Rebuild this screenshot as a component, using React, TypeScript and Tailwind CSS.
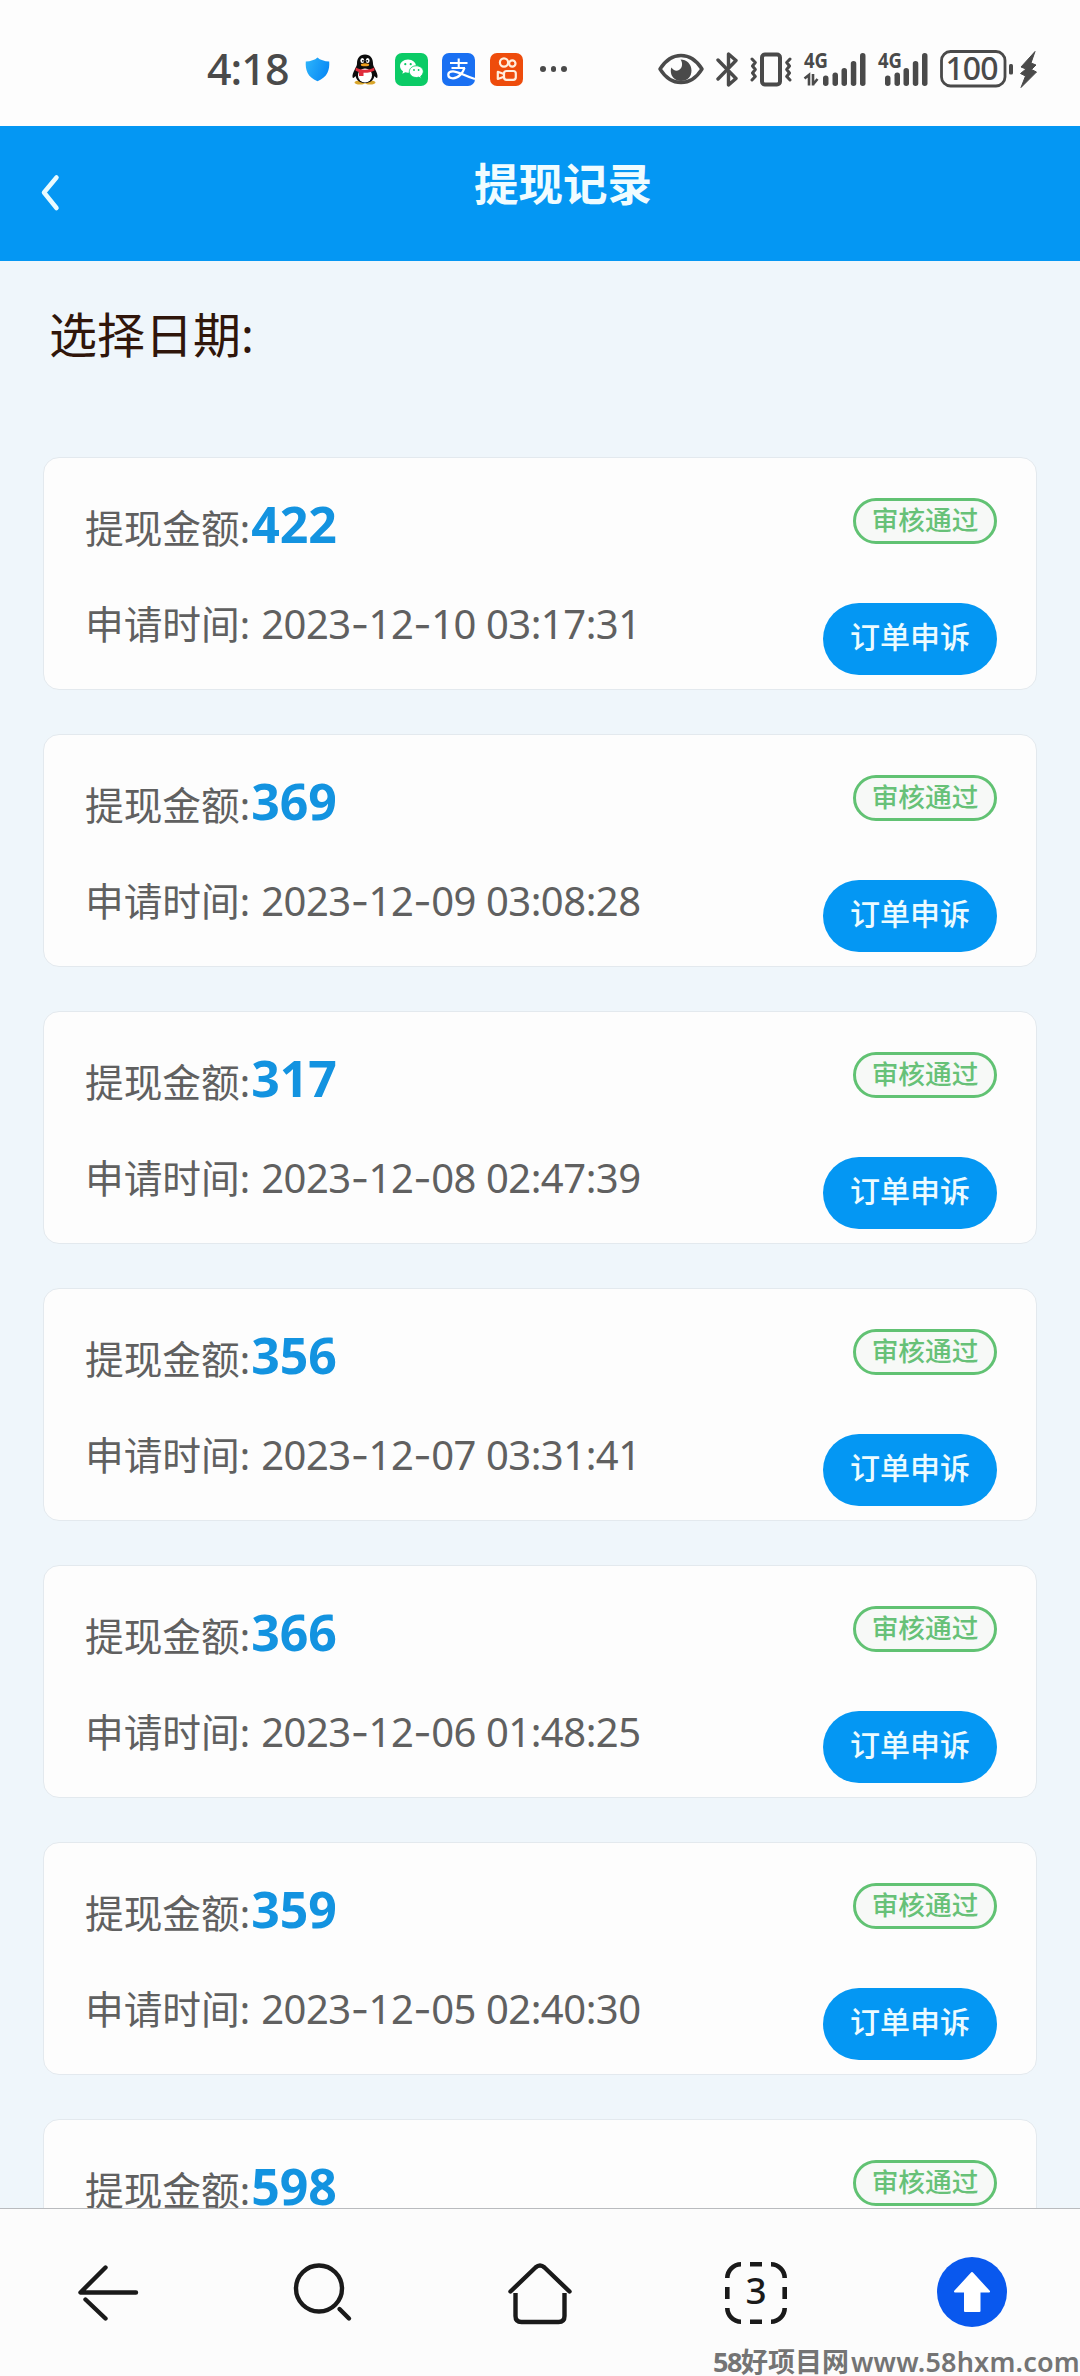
import { Fragment } from 'react';

interface WithdrawRecord {
  amount: number;
  appliedAt: string;
}

const records: WithdrawRecord[] = [
  { amount: 422, appliedAt: '2023-12-10 03:17:31' },
  { amount: 369, appliedAt: '2023-12-09 03:08:28' },
  { amount: 317, appliedAt: '2023-12-08 02:47:39' },
  { amount: 356, appliedAt: '2023-12-07 03:31:41' },
  { amount: 366, appliedAt: '2023-12-06 01:48:25' },
  { amount: 359, appliedAt: '2023-12-05 02:40:30' },
  { amount: 598, appliedAt: '' },
];

function ShieldIcon() {
  return (
    <svg width="25" height="25" viewBox="0 0 25 25">
      <defs>
        <linearGradient id="shield" x1="0" y1="0" x2="1" y2="0.4">
          <stop offset="0" stopColor="#2fb6fb" />
          <stop offset="1" stopColor="#0a8bf5" />
        </linearGradient>
      </defs>
      <path d="M12.5 0.5C15 3 19.500 4.300 24.200 4.500C24.800 13 22.500 20 12.500 24.300C2.500 20 0.200 13 0.800 4.500C5.500 4.300 10 3 12.500 0.500Z" fill="url(#shield)" />
    </svg>
  );
}

function PenguinIcon() {
  return (
    <svg width="26" height="31" viewBox="0 0 26 31">
      <ellipse cx="8" cy="28.500" rx="5.500" ry="2" fill="#d9a62c" />
      <ellipse cx="18" cy="28.500" rx="5.500" ry="2" fill="#d9a62c" />
      <path d="M13 0.500C7.500 0.500 5 4.500 5 9.500C5 11 4.300 12.500 3 15C1.200 18.500 0 21.500 0.600 23.500C1.200 24.500 2.500 23.500 3.500 22C4.500 26.500 8 29 13 29S21.500 26.500 22.500 22C23.500 23.500 24.800 24.500 25.400 23.500C26 21.500 24.800 18.500 23 15C21.700 12.500 21 11 21 9.500C21 4.500 18.500 0.500 13 0.500Z" fill="#0c0c0c" />
      <ellipse cx="13" cy="21.500" rx="7" ry="7" fill="#fff" />
      <ellipse cx="10.300" cy="6.500" rx="1.900" ry="2.600" fill="#fff" />
      <ellipse cx="15.700" cy="6.500" rx="1.900" ry="2.600" fill="#fff" />
      <circle cx="10.900" cy="6.800" r="0.900" fill="#000" />
      <circle cx="15.200" cy="6.800" r="0.900" fill="#000" />
      <ellipse cx="13" cy="10.800" rx="4.200" ry="1.500" fill="#f0a01e" />
      <path d="M3.800 13.500C9 16.500 17 16.500 22.200 13.500L22.500 16.500C19 18.500 15 19 11.500 18.800V22H7V18C5.500 17.600 4.500 17.200 3.500 16.500Z" fill="#e02d3c" />
    </svg>
  );
}

function WechatIcon() {
  return (
    <svg width="33" height="33" viewBox="0 0 33 33">
      <rect width="33" height="33" rx="7" fill="#0bcb66" />
      <path d="M13 6.500C8.400 6.500 5 9.500 5 13C5 15.200 6.200 17 8 18.200L7.400 20.700L10.200 19.300Q11.500 19.700 13 19.700C17.600 19.700 21 16.700 21 13.100S17.600 6.500 13 6.500Z" fill="#fff" />
      <path d="M21.300 12.800C17.400 12.800 14.300 15.400 14.300 18.600S17.400 24.500 21.300 24.500Q22.500 24.500 23.700 24.100L26.300 25.500L25.700 23.200C27.300 22.100 28.300 20.500 28.300 18.600C28.300 15.400 25.200 12.800 21.300 12.800Z" fill="#fff" stroke="#0bcb66" strokeWidth="0.900" />
      <g fill="#0bcb66">
        <circle cx="10.300" cy="11.200" r="1.100" />
        <circle cx="15.700" cy="11.200" r="1.100" />
        <circle cx="19" cy="17" r="0.900" />
        <circle cx="23.600" cy="17" r="0.900" />
      </g>
    </svg>
  );
}

function AlipayIcon() {
  return (
    <svg width="34" height="33" viewBox="0 0 34 33" fill="none" stroke="#fff">
      <rect width="33" height="33" rx="7" fill="#1a70f2" stroke="none" />
      <path d="M8 10H25.500M16.700 5.500V15M9.500 15H23" strokeWidth="2.100" />
      <path d="M22.500 15C21 19.500 16.500 25.300 11 25.300C7.500 25.300 6.300 23.500 6.300 21.800C6.300 19.800 8 18.300 11 18.300C16 18.300 21 22.500 33 26" strokeWidth="2.300" />
    </svg>
  );
}

function KuaishouIcon() {
  return (
    <svg width="33" height="33" viewBox="0 0 33 33" fill="none" stroke="#ffeedd" strokeWidth="2.200" strokeLinejoin="round">
      <rect width="33" height="33" rx="7" fill="#ee4c0c" stroke="none" />
      <circle cx="14" cy="9.500" r="4.100" />
      <circle cx="22.300" cy="10.500" r="3.200" />
      <rect x="14" y="18" width="11.800" height="8.800" rx="2.500" />
      <path d="M14 21L7.800 18.800V26L14 23.800" />
    </svg>
  );
}

function EyeIcon() {
  return (
    <svg width="46" height="32" viewBox="0 0 46 32">
      <path d="M2 16C7 8 14 2.500 23 2.500S39 8 44 16C39 24 32 29.500 23 29.500S7 24 2 16Z" fill="none" stroke="#4a4a4a" strokeWidth="3.400" strokeLinejoin="round" />
      <path d="M22.500 6.500C28.500 6.500 33.500 11 33.500 17.500S29 28 23 28S12.800 23.500 12.800 18C12.800 16.500 13 15.500 13.500 14.500C15 17.500 18.500 18.500 21 17C24.500 15 25 10 22.500 6.500Z" fill="#4a4a4a" />
    </svg>
  );
}

function BluetoothIcon() {
  return (
    <svg width="22" height="35" viewBox="0 0 22 35" fill="none" stroke="#4a4a4a" strokeWidth="3.400" strokeLinecap="round" strokeLinejoin="round">
      <path d="M2 8L20 26.500L12.500 33V21M2 27L20 8.500L12.500 2V14" />
    </svg>
  );
}

function VibrateIcon() {
  return (
    <svg width="42" height="35" viewBox="0 0 42 35" fill="none" stroke="#4a4a4a" strokeLinecap="round" strokeLinejoin="round">
      <rect x="12" y="2.500" width="18" height="30" rx="3" strokeWidth="4" />
      <path d="M2 7L5.300 10.500L2.500 14L5.300 17.500L2.500 21L5.300 24.500L2 28M40 7L36.700 10.500L39.500 14L36.700 17.500L39.500 21L36.700 24.500L40 28" strokeWidth="3" />
    </svg>
  );
}

function SignalIcon({ withData }: { withData?: boolean }) {
  const shift = withData ? 12 : 0;

  return (
    <svg
      width={withData ? 62 : 50}
      height="36"
      viewBox={withData ? '0 0 62 36' : '0 0 50 36'}
      fill="#4a4a4a"
      className="overflow-visible"
    >
      <text x="0" y="16.500" fontSize="22" fontWeight="700" textLength="24" lengthAdjust="spacingAndGlyphs" className="font-['Noto_Sans']">4G</text>
      {withData && (
        <path d="M0.500 27.500L5 24V34.500M9 23V34.500M9 33.500L13.500 28" fill="none" stroke="#4a4a4a" strokeWidth="2.600" />
      )}
      <g transform={`translate(${shift} 0)`}>
        <rect x="7" y="24.500" width="5.500" height="10.500" rx="2.700" />
        <rect x="16.500" y="21.500" width="5.500" height="13.500" rx="2.700" />
        <rect x="25.500" y="17" width="5.500" height="18" rx="2.700" />
        <rect x="34.800" y="10" width="5.500" height="25" rx="2.700" />
        <rect x="44" y="2" width="5.500" height="33" rx="2.700" />
      </g>
    </svg>
  );
}

function BatteryIcon() {
  return (
    <svg width="74" height="38" viewBox="0 0 74 38" className="overflow-visible">
      <rect x="1.500" y="1.500" width="63.500" height="34.500" rx="9" fill="none" stroke="#4a4a4a" strokeWidth="2.800" />
      <rect x="69" y="14" width="4" height="10.500" rx="1.500" fill="#4a4a4a" />
      <text x="5.500" y="30" fontSize="32" fontWeight="500" textLength="53" fill="#4a4a4a" className="font-['Noto_Sans']">100</text>
    </svg>
  );
}

function BoltIcon() {
  return (
    <svg width="17" height="37" viewBox="0 0 17 37" fill="#4a4a4a">
      <path d="M15 0.500L1 16L6 18L0.500 22.500L5.500 25L1 36.500L16.500 21L11.500 18.500L16 14L11 12Z" stroke="#4a4a4a" strokeLinejoin="round" />
    </svg>
  );
}

function StatusBar() {
  return (
    <div className="flex h-[126px] shrink-0 items-center justify-between bg-[#fdfdfd] pt-3 pr-[43px] pl-[207px] text-[#4a4a4a]">
      <div className="flex items-center">
        <span className="w-[98px] text-[43px] leading-[60px] font-medium tracking-[-1px]">4:18</span>
        <ShieldIcon />
        <div className="ml-[22px] flex"><PenguinIcon /></div>
        <div className="ml-[17px] flex items-center gap-[14px]">
          <WechatIcon />
          <AlipayIcon />
          <KuaishouIcon />
        </div>
        <div className="ml-[17px] flex gap-[5px]">
          <i className="size-[5.500px] rounded-full bg-[#4a4a4a]" />
          <i className="size-[5.500px] rounded-full bg-[#4a4a4a]" />
          <i className="size-[5.500px] rounded-full bg-[#4a4a4a]" />
        </div>
      </div>
      <div className="flex items-center gap-3">
        <EyeIcon />
        <BluetoothIcon />
        <VibrateIcon />
        <SignalIcon withData />
        <SignalIcon />
        <div className="flex items-center gap-1.5">
          <BatteryIcon />
          <BoltIcon />
        </div>
      </div>
    </div>
  );
}

function Header() {
  return (
    <header className="flex h-[135px] shrink-0 items-start bg-[#0497f3] text-white">
      <button className="mt-[48px] ml-10 flex" aria-label="返回">
        <svg width="20" height="38" viewBox="0 0 20 38" fill="none" stroke="#e9fbff" strokeWidth="4.500" strokeLinecap="round" strokeLinejoin="round">
          <path d="M16.500 3.500L4 18.500L16.500 34" />
        </svg>
      </button>
      <h1 className="mt-[22px] ml-[414px] text-[44.500px] leading-[72px] font-bold text-[#f0fcff]">提现记录</h1>
    </header>
  );
}

// The dashes come from Inter, whose hyphen is longer and sits higher
function DateTime({ value }: { value: string }) {
  return (
    <span className="ml-[11px] text-[40px] tracking-[-0.5px]">
      {value.split('-').map((part, i) => (
        <Fragment key={i}>
          {i > 0 && <span className="font-['Inter']">-</span>}
          {part}
        </Fragment>
      ))}
    </span>
  );
}

function RecordCard({ record }: { record: WithdrawRecord }) {
  return (
    <li className="flex h-[233px] shrink-0 justify-between rounded-2xl border border-[#e3e9ee] bg-[#fdfdfd] pr-[39px] pl-[41px] text-[#606060]">
      <div>
        <div className="mt-[34px] flex h-[64px] items-baseline text-[38.700px] leading-[64px]">
          提现金额:
          <span className="ml-px text-[50px] font-bold text-[#1393e0]">{record.amount}</span>
        </div>
        {record.appliedAt && (
          <div className="mt-[36px] flex h-[64px] items-baseline text-[38.700px] leading-[64px]">
            申请时间:
            <DateTime value={record.appliedAt} />
          </div>
        )}
      </div>
      <div className="flex flex-col items-end">
        <span className="mt-[40px] flex h-[46px] w-[144px] justify-center rounded-full border-3 border-[#61c273] bg-[#f7f9f7] text-[26.700px] leading-[38px] font-medium text-[#67c178]">
          审核通过
        </span>
        <button className="mt-[59px] h-[72px] w-[174px] rounded-full bg-[#0497f3] pb-1 text-[30px] leading-[44px] font-medium text-[#ecfbff]">
          订单申诉
        </button>
      </div>
    </li>
  );
}

function BrowserNav() {
  return (
    <nav className="relative h-[168px] shrink-0 border-t border-[#b9bbbe] bg-[#fcfcfc]">
      <div className="flex items-start pt-[48px] pl-[77px]">
        <svg className="mt-[7px]" width="62" height="58" viewBox="0 0 62 58" fill="none" stroke="#1a1a1a" strokeWidth="4.400" strokeLinecap="round">
          <path d="M28.500 3.500L3.500 28.500H59M8.500 35.500L28.500 54.500" strokeLinejoin="round" />
        </svg>
        <svg className="mt-[5px] ml-[153px]" width="62" height="62" viewBox="0 0 62 62" fill="none" stroke="#1a1a1a" strokeWidth="4.400" strokeLinecap="round">
          <circle cx="27" cy="26.500" r="23" />
          <path d="M47.500 47L57 56.500" />
        </svg>
        <svg className="mt-[3px] ml-[153px]" width="66" height="66" viewBox="0 0 66 66" fill="none" stroke="#1a1a1a" strokeWidth="4.400">
          <path d="M3.500 31.500L28.500 7.500Q33 3.500 37.500 7.500L62.500 31.500" strokeLinecap="round" />
          <path d="M8.500 33V56Q8.500 62 14.500 62H51.500Q57.500 62 57.500 56V33" />
        </svg>
        <div className="mt-[5px] ml-[152px] flex">
          <svg width="62" height="62" viewBox="0 0 62 62" fill="none" stroke="#1a1a1a" strokeWidth="4.600">
            <path d="M2.300 16C2.300 8.500 8.500 2.300 16 2.300M46 2.300C53.500 2.300 59.700 8.500 59.700 16M59.700 46C59.700 53.500 53.500 59.700 46 59.700M16 59.700C8.500 59.700 2.300 53.500 2.300 46M25 2.300H37M25 59.700H37M2.300 25V37M59.700 25V37" />
            <text x="31" y="42" textAnchor="middle" fontSize="37" fontWeight="500" fill="#1a1a1a" stroke="none" className="font-['Noto_Sans']">3</text>
          </svg>
        </div>
        <svg className="ml-[150px]" width="70" height="70" viewBox="0 0 70 70">
          <circle cx="35" cy="35" r="35" fill="#0958ee" />
          <path d="M35 16L52 34.500H42.500V54H28V34.500H18Z" fill="#fff" stroke="#fff" strokeWidth="2" strokeLinejoin="round" />
        </svg>
      </div>
      <div className="absolute right-0 bottom-[-4px] flex w-[367px] items-baseline text-[27px] leading-[36px] font-bold whitespace-nowrap text-[#747474]">
        <span className="w-[28px] tracking-[-1.500px]">58</span>
        <span>好项目网</span>
        <span className="ml-0.5 text-[27px] font-semibold tracking-[0.2px]">www.58hxm.com</span>
      </div>
    </nav>
  );
}

export default function App() {
  return (
    <div className="flex h-[2376px] w-[1080px] flex-col overflow-hidden bg-[#eff6fb] font-['Noto_Sans','Noto_Sans_CJK_SC',sans-serif]">
      <StatusBar />
      <Header />
      <main className="min-h-0 flex-1 overflow-hidden px-[43px]">
        <div className="h-[196px] pt-[44px] pl-[6px] text-[48px] leading-[60px] text-[#30160b]">选择日期:</div>
        <ul className="flex flex-col gap-11">
          {records.map(record => (
            <RecordCard key={record.amount} record={record} />
          ))}
        </ul>
      </main>
      <BrowserNav />
    </div>
  );
}
